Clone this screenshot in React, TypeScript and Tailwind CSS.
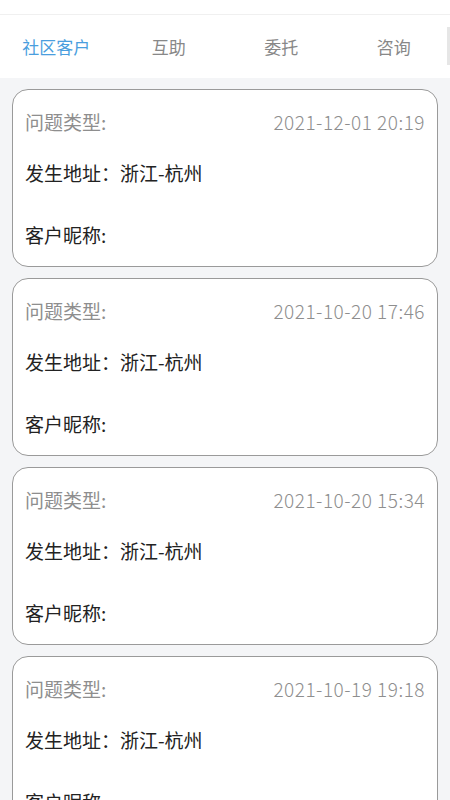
import React from "react";

const cards = [
  "2021-12-01 20:19",
  "2021-10-20 17:46",
  "2021-10-20 15:34",
  "2021-10-19 19:18",
];

const tabs = ["社区客户", "互助", "委托", "咨询"];

export default function App() {
  return (
    <div
      className="w-[450px] h-[800px] overflow-hidden bg-[#f4f5f7]"
      style={{ fontFamily: '"Noto Sans CJK SC", "Noto Sans", sans-serif' }}
    >
      <div className="h-[15px] bg-white border-b border-[#f0f0f0]" />
      <div className="relative h-[63px] bg-white flex items-center">
        {tabs.map((t, i) => (
          <div
            key={t}
            className={`flex-1 text-center text-[17px] ${
              i === 0 ? "text-[#4a9ede]" : "text-[#888888]"
            }`}
          >
            {t}
          </div>
        ))}
        <div className="absolute right-0 top-[12px] w-[3px] h-[38px] bg-[#e6e6e6]" />
      </div>
      <div className="flex flex-col gap-[11px] px-[12px] pt-[11px]">
        {cards.map((d) => (
          <div
            key={d}
            className="shrink-0 h-[178px] bg-white rounded-[16px] border border-[#9a9a9a] pl-[12px] pr-[12px] pt-[18px] flex flex-col"
          >
            <div className="flex justify-between items-center h-[28px] text-[19px] text-[#8e8e8e]">
              <span>问题类型:</span>
              <span className="tracking-[0.5px] font-light">{d}</span>
            </div>
            <div className="mt-[23px] h-[28px] flex items-center text-[19px] text-[#222222]">
              发生地址：浙江-杭州
            </div>
            <div className="mt-[34px] h-[28px] flex items-center text-[19px] text-[#222222]">
              客户昵称:
            </div>
          </div>
        ))}
      </div>
    </div>
  );
}
